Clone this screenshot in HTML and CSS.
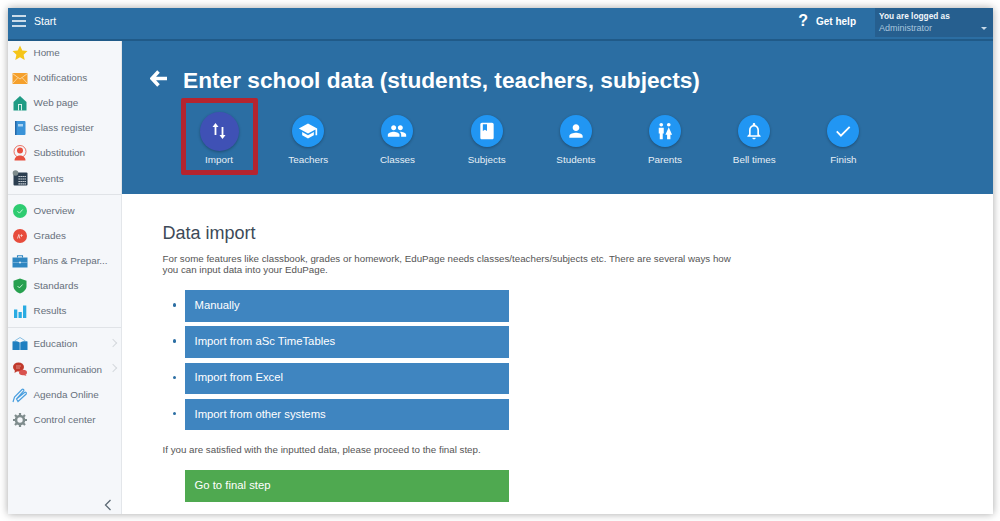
FILE: index.html
```html
<!DOCTYPE html>
<html lang="en">
<head>
<meta charset="utf-8">
<title>Enter school data</title>
<link rel="stylesheet" href="styles.css">
</head>
<body>
<div class="app">
  <header class="topbar">
    <svg class="burger" width="15" height="12" viewBox="0 0 15 12"><path d="M0 1h14M0 6h14M0 11h14" stroke="#fff" stroke-width="1.3"/></svg>
    <span class="start">Start</span>
    <span class="spacer"></span>
    <span class="qmark">?</span>
    <span class="help">Get help</span>
    <div class="user">
      <div class="user-l1">You are logged as</div>
      <div class="user-l2">Administrator</div>
      <span class="caret"></span>
    </div>
  </header>
  <div class="body">
    <nav class="side">
      <div class="group first">
        <div class="item"><svg class="ic" viewBox="0 0 16 16"><path d="M8 .5l2.300 5 5.200.6-3.900 3.600 1.100 5.300L8 12.300 3.300 15l1.100-5.300L.5 6.100l5.200-.6z" fill="#f5c518"/></svg>Home</div>
        <div class="item"><svg class="ic" viewBox="0 0 16 16"><rect x=".5" y="3" width="15" height="11" fill="#f5a02c"/><path d="M.5 3.500L8 9l7.500-5.500M.5 13.500L6 7.500M15.500 13.500L10 7.500" fill="none" stroke="#fde3b5" stroke-width=".8"/></svg>Notifications</div>
        <div class="item"><svg class="ic" viewBox="0 0 16 16"><path d="M8 1l6.500 6v8.500h-13V7z" fill="#1f9b84"/><path d="M6 9h4v6.500H9V10H7v5.500H6z" fill="#d8efe9"/></svg>Web page</div>
        <div class="item"><svg class="ic" viewBox="0 0 16 16"><rect x="3" y="1" width="10.500" height="14" rx="1" fill="#3a93d8"/><rect x="3" y="1" width="1.500" height="14" fill="#2568a8"/><rect x="6" y="4" width="5" height="2.500" fill="#a9d3f2"/></svg>Class register</div>
        <div class="item"><svg class="ic" viewBox="0 0 16 16"><circle cx="8" cy="6.500" r="6" fill="none" stroke="#e8503f" stroke-width=".8"/><circle cx="8" cy="5.500" r="3" fill="#e8503f"/><path d="M2.500 15.500c0-3.500 3-5 5.500-5s5.500 1.500 5.500 5z" fill="#e8503f"/></svg>Substitution</div>
        <div class="item"><svg class="ic" viewBox="0 0 16 16"><rect x="1.500" y="2.500" width="14" height="13" rx="1" fill="#2c3e50"/><circle cx="3.500" cy="3" r="2.800" fill="#7f8c8d"/><path d="M6.500 6.500h7.500M6.500 9h7.500M6.500 11.500h7.500M6.500 13.800h7.500" stroke="#e8edf0" stroke-width="1.200" stroke-dasharray="1.300 .7"/></svg>Events</div>
      </div>
      <div class="group">
        <div class="item"><svg class="ic" viewBox="0 0 16 16"><circle cx="8" cy="8" r="7" fill="#2ecc71"/><path d="M5.500 8.200l1.900 1.900 3.300-3.600" fill="none" stroke="#d8f7e4" stroke-width=".9"/></svg>Overview</div>
        <div class="item"><svg class="ic" viewBox="0 0 16 16"><circle cx="8" cy="8" r="7" fill="#e74c3c"/><path d="M5.500 10.500l1.300-4 1 4M9.500 6.300v2.500M8.400 7.500h2.300" fill="none" stroke="#f9d5d0" stroke-width=".9"/></svg>Grades</div>
        <div class="item"><svg class="ic" viewBox="0 0 16 16"><path d="M.5 4.500h15v10H.5z" fill="#2e86c1"/><path d="M5.500 4.500V2.700h5v1.800" fill="none" stroke="#2e86c1" stroke-width="1.100"/><path d="M.5 9.500h15" stroke="#a9cfe9" stroke-width=".5"/><rect x="7" y="8.700" width="2" height="1.600" fill="#d5e8f5"/></svg>Plans &amp; Prepar...</div>
        <div class="item"><svg class="ic" viewBox="0 0 16 16"><path d="M8 .5l6.500 2.300v5.500c0 3.500-3.500 6.200-6.500 7.200-3-1-6.500-3.700-6.500-7.200V2.800z" fill="#27a04f"/><path d="M5.500 8l1.900 1.900 3.200-3.400" fill="none" stroke="#d8f7e4" stroke-width=".9"/></svg>Standards</div>
        <div class="item"><svg class="ic" viewBox="0 0 16 16"><path d="M2 6.500h3.300V15H2zM6.500 9h3.300v6H6.500zM11 2.500h3.300V15H11z" fill="#29abe2"/></svg>Results</div>
      </div>
      <div class="group last">
        <div class="item"><svg class="ic" viewBox="0 0 16 16"><path d="M.5 5.500c2.500-.5 5.500-.2 7.500 1.200 2-1.400 5-1.700 7.500-1.200v8.500H.5z" fill="#1f7fc0"/><path d="M8 1.500L2.500 5M8 1.500L13.500 5" stroke="#6bb1de" stroke-width=".8"/><path d="M8 6.500V14" stroke="#cfe6f5" stroke-width=".7"/></svg>Education<span class="more"></span></div>
        <div class="item"><svg class="ic" viewBox="0 0 16 16"><ellipse cx="6.500" cy="6" rx="5.500" ry="4.500" fill="#c0392b"/><path d="M3 9l-.5 3 3-2z" fill="#c0392b"/><ellipse cx="11" cy="11.500" rx="4" ry="2.800" fill="#d9534f"/><path d="M13 13l1.500 2-3-1z" fill="#d9534f"/><path d="M4 5h5M4 7h4" stroke="#f1c4bf" stroke-width=".6"/></svg>Communication<span class="more"></span></div>
        <div class="item"><svg class="ic" viewBox="0 0 16 16"><path d="M1 15l1.500-5L10 2.500c1-.8 2.500.3 1.700 1.500L4.500 12M4.500 12L12.500 5.500c1-.8 2.500.3 1.700 1.500L6 14.500z" fill="none" stroke="#4a9fdf" stroke-width="1.200"/></svg>Agenda Online</div>
        <div class="item"><svg class="ic" viewBox="0 0 16 16"><circle cx="8" cy="8" r="4" fill="none" stroke="#7f8c8d" stroke-width="2.600"/><path d="M8 1v3M8 12v3M1 8h3M12 8h3M3 3l2.200 2.200M10.800 10.800L13 13M13 3l-2.200 2.200M5.200 10.800L3 13" stroke="#7f8c8d" stroke-width="2.200"/></svg>Control center</div>
      </div>
      <div class="collapse"><svg width="8" height="12" viewBox="0 0 8 12"><path d="M6.500 1L1.500 6l5 5" fill="none" stroke="#5d6b75" stroke-width="1.300"/></svg></div>
    </nav>
    <main class="main">
      <section class="hero">
        <div class="title-row">
          <svg class="back" width="18" height="18" viewBox="0 0 18 18"><path d="M8.500 1.500L2 8.500l6.500 7M2.500 8.500H17" fill="none" stroke="#fff" stroke-width="3.500"/></svg>
          <h1>Enter school data (students, teachers, subjects)</h1>
        </div>
        <div class="steps">
          <div class="step active">
            <div class="circle"><svg width="18" height="18" viewBox="0 0 18 18"><path d="M5.500 13V4M12.500 5v9" fill="none" stroke="#fff" stroke-width="1.800"/><path d="M5.500 1L2.500 5h6zM12.500 17l3-4h-6z" fill="#fff"/></svg></div>
            <span>Import</span>
          </div>
          <div class="step">
            <div class="circle"><svg width="20" height="20" viewBox="0 0 24 24"><path d="M5 13.200v4L12 21l7-3.800v-4L12 17zM12 3L1 9l11 6 9-4.900V17h2V9z" fill="#fff"/></svg></div>
            <span>Teachers</span>
          </div>
          <div class="step">
            <div class="circle"><svg width="20" height="20" viewBox="0 0 24 24"><path d="M16 11c1.700 0 3-1.300 3-3s-1.300-3-3-3-3 1.300-3 3 1.300 3 3 3zm-8 0c1.700 0 3-1.300 3-3S9.700 5 8 5 5 6.300 5 8s1.300 3 3 3zm0 2c-2.300 0-7 1.200-7 3.500V19h14v-2.500C15 14.200 10.300 13 8 13zm8 0h-1c1.200.8 2 2 2 3.500V19h6v-2.500c0-2.300-4.700-3.500-7-3.500z" fill="#fff"/></svg></div>
            <span>Classes</span>
          </div>
          <div class="step">
            <div class="circle"><svg width="20" height="20" viewBox="0 0 24 24"><path d="M18 2H6C4.900 2 4 2.900 4 4v16c0 1.100.9 2 2 2h12c1.100 0 2-.9 2-2V4c0-1.100-.9-2-2-2zM7 4h5v8l-2.500-1.500L7 12z" fill="#fff" fill-rule="evenodd"/></svg></div>
            <span>Subjects</span>
          </div>
          <div class="step">
            <div class="circle"><svg width="20" height="20" viewBox="0 0 24 24"><path d="M12 12c2.200 0 4-1.800 4-4s-1.800-4-4-4-4 1.800-4 4 1.800 4 4 4zm0 2c-2.700 0-8 1.300-8 4v2h16v-2c0-2.700-5.300-4-8-4z" fill="#fff"/></svg></div>
            <span>Students</span>
          </div>
          <div class="step">
            <div class="circle"><svg width="20" height="20" viewBox="0 0 24 24"><circle cx="7.500" cy="4.500" r="2.200" fill="#fff"/><circle cx="16.500" cy="4.500" r="2.200" fill="#fff"/><path d="M4.500 8h6v7H9.300v7H5.700v-7H4.500zM16.500 7.500l4 9h-2v5.500h-4v-5.500h-2z" fill="#fff"/></svg></div>
            <span>Parents</span>
          </div>
          <div class="step">
            <div class="circle"><svg width="20" height="20" viewBox="0 0 24 24"><path d="M12 22c1.100 0 2-.9 2-2h-4c0 1.100.9 2 2 2zm6-6v-5c0-3.100-1.600-5.600-4.500-6.300V4c0-.8-.7-1.500-1.500-1.500s-1.500.7-1.500 1.500v.7C7.600 5.400 6 7.900 6 11v5l-2 2v1h16v-1zm-2 1H8v-6c0-2.500 1.500-4.500 4-4.500s4 2 4 4.500z" fill="#fff"/></svg></div>
            <span>Bell times</span>
          </div>
          <div class="step">
            <div class="circle"><svg width="20" height="20" viewBox="0 0 24 24"><path d="M4.500 12.500l5 5L20 7" fill="none" stroke="#fff" stroke-width="2.200"/></svg></div>
            <span>Finish</span>
          </div>
        </div>
        <div class="mark"></div>
      </section>
      <section class="content">
        <h2>Data import</h2>
        <p class="intro">For some features like classbook, grades or homework, EduPage needs classes/teachers/subjects etc. There are several ways how you can input data into your EduPage.</p>
        <ul class="options">
          <li><a class="btn">Manually</a></li>
          <li><a class="btn">Import from aSc TimeTables</a></li>
          <li><a class="btn">Import from Excel</a></li>
          <li><a class="btn">Import from other systems</a></li>
        </ul>
        <p class="outro">If you are satisfied with the inputted data, please proceed to the final step.</p>
        <a class="btn green">Go to final step</a>
      </section>
    </main>
  </div>
</div>
</body>
</html>
```
FILE: styles.css
```css
* { box-sizing: border-box; }
html, body { margin: 0; height: 100%; overflow: hidden; }
body { background: #fff; font-family: "Liberation Sans", Arial, sans-serif; padding: 8px 7px 7px 8px; }
.app { height: 506px; display: flex; flex-direction: column; background: #fff; box-shadow: 0 0 8px rgba(0,0,0,.35); overflow: hidden; }
.topbar { height: 33px; flex: none; background: #2b6ea3; border-bottom: 2px solid #205a88; display: flex; align-items: center; color: #fff; padding: 0 0 5px 4px; }
.start { font-size: 10.500px; margin-left: 7px; }
.spacer { flex: 1; }
.qmark { font-weight: 700; font-size: 16px; margin-right: 8px; }
.help { font-weight: 700; font-size: 10px; margin-right: 19px; }
.user { position: relative; width: 118px; height: 29px; align-self: flex-start; background: #265f8f; padding: 3px 4px; font-size: 9px; line-height: 11.500px; }
.user-l1 { font-weight: 700; color: #f2f6fa; font-size: 8.300px; }
.user-l2 { color: #a9c6de; }
.caret { position: absolute; right: 6px; bottom: 7px; border: 3px solid transparent; border-top: 3px solid #c7d9e8; border-bottom: 0; }
.body { flex: 1; display: flex; min-height: 0; }
.side { width: 114px; flex: none; background: #f5f7fa; border-right: 1px solid #e3e6ea; display: flex; flex-direction: column; font-size: 9.900px; color: #666f7a; }
.group { border-bottom: 1px solid #e0e3e7; padding: 0 0 3.500px; }
.group.first { margin-top: -1px; }
.group + .group { padding-top: 3px; }
.group.last { border-bottom: 0; flex: 1; }
.item { height: 25.100px; display: flex; align-items: center; padding-left: 4px; position: relative; white-space: nowrap; }
.group.last .item { height: 25.400px; }
.ic { width: 16px; height: 16px; margin-right: 5.500px; flex: none; }
.more { position: absolute; right: 5px; top: 9px; width: 6px; height: 6px; border-top: 1px solid #d5d9dd; border-right: 1px solid #d5d9dd; transform: rotate(45deg); }
.collapse { display: flex; justify-content: flex-end; padding: 0 9px 3px 0; }
.main { flex: 1; min-width: 0; display: flex; flex-direction: column; }
.hero { position: relative; height: 153px; flex: none; background: #2b6ea3; padding: 26px 0 0 28px; }
.title-row { display: flex; align-items: center; height: 27px; }
.back { margin-right: 15px; flex: none; margin-top: -4px; }
h1 { margin: 0; font-size: 22.700px; font-weight: 700; color: #fff; white-space: nowrap; }
.steps { display: flex; margin: 13px 0 0 24.500px; }
.step { width: 89.200px; height: 66px; display: flex; flex-direction: column; align-items: center; color: #e6eff6; font-size: 9.900px; }
.circle { width: 32px; height: 32px; margin: 8px 0 7px; border-radius: 50%; background: #2196f3; display: flex; align-items: center; justify-content: center; box-shadow: 0 1px 3px rgba(0,0,0,.3); }
.step.active .circle { width: 39px; height: 39px; margin: 4.500px 0 3.500px; background: #3f51b5; }
.mark { position: absolute; left: 59px; top: 57px; width: 77px; height: 77px; border: 5px solid #b5242f; border-radius: 2px; }
.content { flex: 1; padding: 28px 0 0 40.500px; color: #555; }
h2 { margin: 0; font-size: 18px; font-weight: 400; color: #3d4a58; line-height: 22px; }
.intro { margin: 9px 0 0; width: 575px; font-size: 9.750px; line-height: 11px; }
.options { margin: 15px 0 0; padding: 0 0 0 10px; list-style: none; }
.options li { height: 36.300px; display: flex; align-items: flex-start; }
.options li::before { content: ""; width: 3.500px; height: 3.500px; margin: 13px 9px 0 0; border-radius: 50%; background: #2b6ea3; flex: none; }
.btn { display: flex; align-items: center; width: 324px; height: 31.500px; padding: 0 0 2px 9.500px; background: #3f85c0; color: #fff; font-size: 11.300px; }
.outro { margin: 9px 0 0; font-size: 9.750px; line-height: 12px; }
.btn.green { background: #4fa950; margin: 14px 0 0 22.500px; }
```
